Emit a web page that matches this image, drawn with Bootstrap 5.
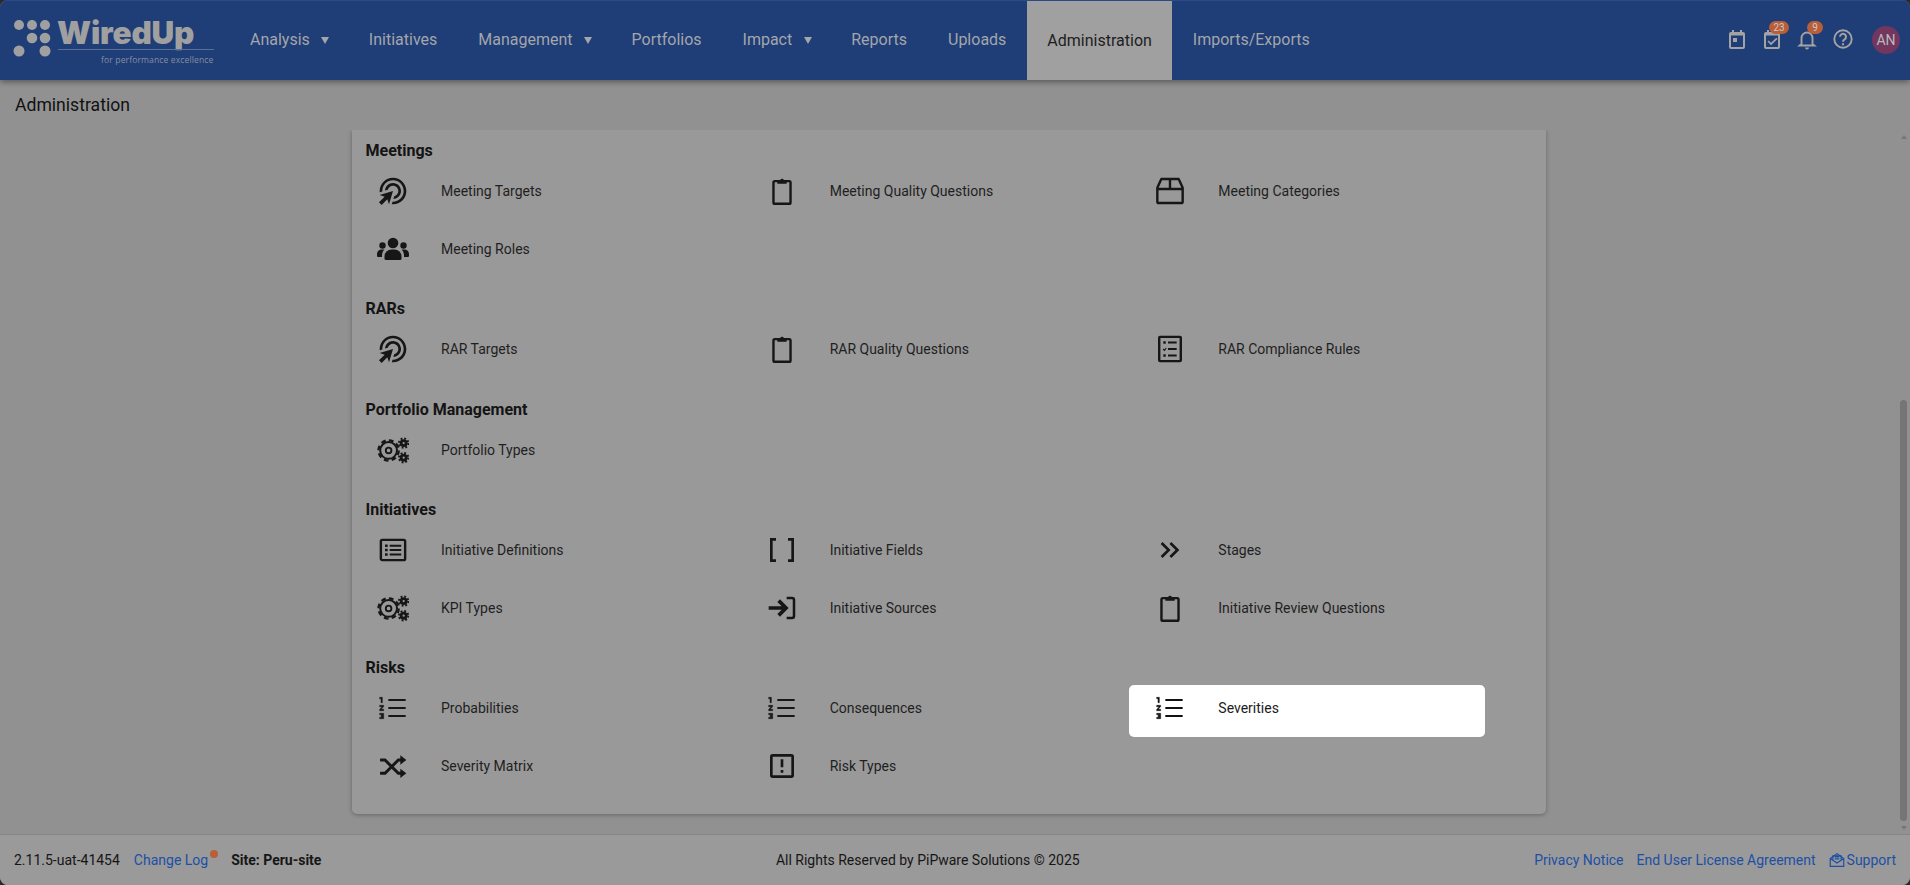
<!DOCTYPE html>
<html lang="en">
<head>
<meta charset="utf-8">
<title>Administration</title>
<link href="https://cdn.jsdelivr.net/npm/bootstrap@5.3.0/dist/css/bootstrap.min.css" rel="stylesheet">
<style>
html,body{height:100%;overflow:hidden;background:#2b2b2b}
body{font-family:Roboto,"Liberation Sans",sans-serif;font-size:14px;color:#1c1c1c}
.app-shell{height:885px;border-radius:8px;overflow:hidden;background:#919191}
.top-bar{height:80px;background:#1f3d77;border-top:1px solid #2a4a8a;box-shadow:0 2px 6px rgba(0,0,0,.4);z-index:2;flex:none}
.logo-brand{width:229.5px;height:79px;flex:none;margin:0;padding:0;position:relative}
.logo-dots{position:absolute;left:0;top:-1px;fill:#a0a0a0}
.logo-word{position:absolute;left:57px;top:10px;font:900 31.5px/44px Inter,"Open Sans",sans-serif;letter-spacing:-.2px;color:#a0a0a0}
.logo-rule{position:absolute;left:58px;width:156px;top:48px;height:1px;background:#5a6f98}
.logo-tag{position:absolute;right:16px;top:52px;font:400 8.6px/14px "Open Sans",sans-serif;letter-spacing:.1px;color:#858da0}
.top-bar .navbar-nav .nav-link{height:78px;display:flex;align-items:center;padding:0 20.5px;font-size:16px;color:#a3a6aa}
.top-bar .navbar-nav .nav-link.has-caret{padding-right:38.5px;position:relative}
.top-bar .navbar-nav .nav-link.has-caret::after{content:"";position:absolute;right:19px;top:36px;border:4.5px solid transparent;border-top:7px solid #a3a6aa;border-bottom:0}
.top-bar .navbar-nav .nav-link.active-tab{background:#a0a0a0;color:#1e1e1e;height:79px}
.tool-icons{margin-left:auto;height:79px;position:relative;width:190px;flex:none}
.tool-btn{position:absolute;top:26px;width:24px;height:24px;color:#a3a3a3}
.tool-btn svg{display:block}
.count-pill{position:absolute;top:-6px;height:13px;border-radius:7px;background:#b85f3a;color:#c9c9c9;font-size:10px;line-height:13px;text-align:center}
.user-avatar{position:absolute;left:152px;top:25px;width:28px;height:28px;border-radius:50%;background:#72365f;color:#b9b9b9;font-size:14px;line-height:28px;text-align:center}
.page-title{height:50px;padding:13px 15px 0;font-size:17.6px;line-height:24px;color:#111;flex:none}
.scroll-area{flex:1 1 auto;min-height:0;position:relative;overflow:hidden;padding-right:12px}
.admin-panel{width:1194px;height:684px;margin:0 auto;background:#999;border-radius:0 0 5px 5px;box-shadow:0 1px 4px rgba(0,0,0,.3);padding:9px 28px 0 0}
.group-title{margin:13.3px 0 5px 13.5px;font-size:16px;line-height:24px;font-weight:700;color:#141414}
.group-title.first-group{margin-top:0}
.admin-item{width:356px;height:52px;margin-bottom:6px;padding-bottom:6px;display:flex;align-items:center;color:#1f1f1f;border-radius:5px;text-decoration:none;line-height:20px;font-size:14px}
.admin-item .icon-slot{width:82px;margin-right:7px;display:flex;justify-content:center;flex:none;color:#161616}
.admin-item.is-highlighted{background:#fff;color:#1c1c1c}
.admin-item.is-highlighted .icon-slot{color:#111}
.scroll-thumb{position:absolute;right:3px;top:270px;width:7px;height:421px;border-radius:4px;background:#757575}
.scroll-up,.scroll-down{position:absolute;right:3px;border:3.5px solid transparent}
.scroll-up{top:5px;border-bottom:4px solid #777;border-top:0}
.scroll-down{bottom:4px;border-top:4px solid #777;border-bottom:0}
.site-footer{height:51px;flex:none;background:#9a9a9a;border-top:1px solid #868686;padding:0 14px;font-size:14px;color:#161616}
.site-footer a{color:#1d4fa5;text-decoration:none}
.foot-gap-log{margin-left:14px}
.foot-gap-site{margin-left:13px}
.foot-gap-link{margin-left:13px}
.foot-gap-support{margin-left:12px}
.alert-dot{display:inline-block;width:8px;height:8px;border-radius:50%;background:#b85f3a;vertical-align:7px;margin-left:2px}
.support-mark{margin-right:1px}
</style>
</head>
<body>
<svg width="0" height="0" class="position-absolute">
<defs>
<symbol id="i-target" viewBox="0 0 24 24"><g transform="translate(24,0) scale(-1,1)"><path fill="currentColor" d="M11.71,17.99C8.53,17.84,6,15.22,6,12c0-3.31,2.69-6,6-6c3.22,0,5.84,2.53,5.99,5.71l-2.1-0.63C15.48,9.31,13.89,8,12,8 c-2.21,0-4,1.79-4,4c0,1.89,1.31,3.48,3.08,3.89L11.71,17.99z M22,12c0,0.3-0.01,0.6-0.04,0.9l-1.97-0.59C20,12.21,20,12.1,20,12 c0-4.42-3.58-8-8-8s-8,3.58-8,8s3.58,8,8,8c0.1,0,0.21,0,0.31-0.01l0.59,1.97C12.6,21.99,12.3,22,12,22C6.48,22,2,17.52,2,12 C2,6.48,6.48,2,12,2S22,6.48,22,12z M18.23,16.26L22,15l-10-3l3,10l1.26-3.77l4.27,4.27l1.98-1.98L18.23,16.26z"/></g></symbol>
<symbol id="i-clip" viewBox="0 0 24 24"><rect x="5.6" y="4.6" width="12.8" height="17" rx="1" fill="none" stroke="currentColor" stroke-width="1.8"/><path fill="currentColor" d="M8.5 3.8h2.100a1.500 1.500 0 0 1 2.800 0h2.100v2.800h-7z"/></symbol>
<symbol id="i-box" viewBox="0 0 24 24"><path fill="none" stroke="currentColor" stroke-width="1.8" stroke-linejoin="round" d="M5.5 3h13l3 6.500V20a1 1 0 0 1-1 1h-17a1 1 0 0 1-1-1V9.500zM2.500 10.500h19M12 3v7.500"/></symbol>
<symbol id="i-check-list" viewBox="0 0 24 24"><rect x="3.900" y="2.900" width="16.200" height="18.200" rx=".6" fill="none" stroke="currentColor" stroke-width="1.800"/><path fill="currentColor" d="M7 6.200h1.800V8H7zM10.500 6.300h6.500v1.500h-6.500zM10.500 11.300h6.500v1.500h-6.500zM7 16h1.800v1.800H7zM10.500 16.200h6.500v1.500h-6.500z"/><path fill="none" stroke="currentColor" stroke-width=".8" d="M6.800 12l1 1 1.400-1.700"/></symbol>
<symbol id="i-group" viewBox="0 0 32 32"><g fill="currentColor"><circle cx="16" cy="10" r="5.300"/><circle cx="5.500" cy="12.500" r="3.200"/><circle cx="26.500" cy="12.500" r="3.200"/><path d="M9 27a1.500 1.500 0 0 1-1.500-1.500v-2a7 7 0 0 1 7-7h3a7 7 0 0 1 7 7v2a1.500 1.500 0 0 1-1.500 1.500z"/><path d="M0 23v-2a4.500 4.500 0 0 1 4.500-4.500h3c-1.800 1.500-2.500 3.500-2.500 6.500v1H1a1 1 0 0 1-1-1z"/><path d="M32 23v-2a4.500 4.500 0 0 0-4.500-4.500h-3c1.800 1.500 2.500 3.500 2.500 6.500v1h4a1 1 0 0 0 1-1z"/></g></symbol>
<symbol id="i-gears" viewBox="0 0 24 24"><g fill="none" stroke="currentColor"><circle cx="8.700" cy="12.300" r="6.300" stroke-width="1.500"/><circle cx="8.700" cy="12.300" r="7.600" stroke-width="1.700" stroke-dasharray="3.500 2.470"/><circle cx="8.700" cy="12.300" r="2.100" stroke-width="1.400"/><circle cx="20" cy="6.800" r="1.900" stroke-width="2.100"/><circle cx="20" cy="6.800" r="3.500" stroke-width="1.500" stroke-dasharray="1.370 1.380"/><circle cx="20" cy="17.800" r="1.900" stroke-width="2.100"/><circle cx="20" cy="17.800" r="3.500" stroke-width="1.500" stroke-dasharray="1.370 1.380"/></g></symbol>
<symbol id="i-list" viewBox="0 0 24 24"><rect x="2.900" y="4.400" width="18.200" height="15.200" rx="1" fill="none" stroke="currentColor" stroke-width="1.800"/><path fill="currentColor" d="M6 7.800h2v1.900H6zM6 11.100h2V13H6zM6 14.400h2v1.900H6zM9.500 8h8.700v1.500H9.500zM9.500 11.300h8.700v1.500H9.500zM9.500 14.600h8.700v1.500H9.500z"/></symbol>
<symbol id="i-brackets" viewBox="0 0 24 24"><path fill="none" stroke="currentColor" stroke-width="2" d="M7.500 4H4v16h3.500M16.500 4H20v16h-3.500"/></symbol>
<symbol id="i-source" viewBox="0 0 24 24"><path fill="none" stroke="currentColor" stroke-width="2.800" d="M2 12h11.500M9.500 6.500l5.500 5.500-5.500 5.500"/><path fill="none" stroke="currentColor" stroke-width="1.900" d="M15.500 4.500h4a1.500 1.500 0 0 1 1.500 1.500v12a1.500 1.500 0 0 1-1.500 1.500h-4"/></symbol>
<symbol id="i-chevrons" viewBox="0 0 24 24"><path fill="currentColor" d="M6.410,6L5,7.410L9.580,12L5,16.590L6.410,18l6-6L6.410,6z M13,6l-1.410,1.410L16.170,12l-4.580,4.590L13,18l6-6L13,6z"/></symbol>
<symbol id="i-numbered" viewBox="0 0 24 24"><path fill="currentColor" stroke="currentColor" stroke-width=".35" d="M2 17h2v.5H3v1h1v.5H2v1h3v-4H2v1zm1-9h1V4H2v1h1v3zm-1 3h1.800L2 13.100v.900h3v-1H3.200L5 10.900V10H2v1z"/><path fill="currentColor" d="M8.500 5.200v1.600H21.500V5.200zM8.500 18.800H21.500v-1.600H8.500zM8.500 12.800H21.500v-1.600H8.500z"/></symbol>
<symbol id="i-shuffle" viewBox="0 0 24 24"><path fill="none" stroke="currentColor" stroke-width="2.200" d="M2.300 7.500h3.700l10 10h2.500M2.300 17.500h3.700l10-10h2.500"/><path fill="currentColor" d="M17.500 4l4.500 3.500-4.500 3.500zM17.500 14l4.500 3.500-4.500 3.500z"/></symbol>
<symbol id="i-alert" viewBox="0 0 24 24"><rect x="4" y="4" width="16" height="16" rx="1" fill="none" stroke="currentColor" stroke-width="2"/><path fill="currentColor" d="M11 7h2v6h-2zM11 15h2v2h-2z"/></symbol>
</defs>
</svg>

<div class="app-shell d-flex flex-column">
  <nav class="navbar navbar-expand top-bar p-0 flex-nowrap align-items-start">
    <a class="navbar-brand logo-brand" href="#">
      <svg class="logo-dots" width="58" height="70" viewBox="0 0 58 70"><circle cx="19" cy="25" r="5"/><circle cx="32" cy="25" r="5"/><circle cx="45" cy="25" r="5"/><circle cx="32" cy="38" r="5.300"/><circle cx="45" cy="38" r="5.300"/><circle cx="19" cy="51" r="5.500"/><circle cx="45" cy="51" r="5.500"/></svg>
      <span class="logo-word">WiredUp</span>
      <span class="logo-rule"></span>
      <span class="logo-tag">for performance excellence</span>
    </a>
    <ul class="navbar-nav flex-row">
      <li class="nav-item"><a class="nav-link has-caret" href="#">Analysis</a></li>
      <li class="nav-item"><a class="nav-link" href="#">Initiatives</a></li>
      <li class="nav-item"><a class="nav-link has-caret" href="#">Management</a></li>
      <li class="nav-item"><a class="nav-link" href="#">Portfolios</a></li>
      <li class="nav-item"><a class="nav-link has-caret" href="#">Impact</a></li>
      <li class="nav-item"><a class="nav-link" href="#">Reports</a></li>
      <li class="nav-item"><a class="nav-link" href="#">Uploads</a></li>
      <li class="nav-item"><a class="nav-link active-tab" href="#">Administration</a></li>
      <li class="nav-item"><a class="nav-link" href="#">Imports/Exports</a></li>
    </ul>
    <div class="tool-icons">
      <span class="tool-btn" style="left:5px"><svg width="24" height="24" viewBox="0 0 24 24"><path fill="currentColor" d="M7 3h2v2h6V3h2v2h1a2 2 0 0 1 2 2v13a2 2 0 0 1-2 2H6a2 2 0 0 1-2-2V7a2 2 0 0 1 2-2h1zM6 8.500V20h12V8.500zM8 11h4v4H8z"/></svg></span>
      <span class="tool-btn" style="left:40px"><svg width="24" height="24" viewBox="0 0 24 24"><path fill="currentColor" d="M7 3h2v2h6V3h2v2h1a2 2 0 0 1 2 2v13a2 2 0 0 1-2 2H6a2 2 0 0 1-2-2V7a2 2 0 0 1 2-2h1zM6 8.500V20h12V8.500zm10.300 2.300 1.200 1.200-6.500 6.200L7.500 14.600l1.200-1.200 2.300 2.300z"/></svg><span class="count-pill" style="left:9px;width:20px">23</span></span>
      <span class="tool-btn" style="left:75px"><svg width="24" height="24" viewBox="0 0 24 24"><path fill="none" stroke="currentColor" stroke-width="1.900" d="M6.500 17v-6a5.500 5.500 0 0 1 11 0v6l1.800 1.500H4.700z"/><path fill="currentColor" d="M10 20.500h4a2 2 0 0 1-4 0z"/></svg><span class="count-pill" style="left:12px;width:16px">9</span></span>
      <span class="tool-btn" style="left:111px"><svg width="24" height="24" viewBox="0 0 24 24"><circle cx="12" cy="12" r="8.700" fill="none" stroke="currentColor" stroke-width="1.900"/><path fill="none" stroke="currentColor" stroke-width="2" d="M9 9.800a3 3 0 1 1 4.700 2.500c-1.100.8-1.700 1.200-1.700 2.500"/><path fill="currentColor" d="M11 16.200h2v2h-2z"/></svg></span>
      <span class="user-avatar">AN</span>
    </div>
  </nav>

  <div class="page-title">Administration</div>

  <main class="scroll-area">
    <div class="admin-panel">
      <div class="group-title first-group">Meetings</div>
      <div class="row g-0">
        <div class="col-4"><a class="admin-item" href="#"><span class="icon-slot"><svg width="32" height="32"><use href="#i-target"/></svg></span>Meeting Targets</a></div>
        <div class="col-4"><a class="admin-item" href="#"><span class="icon-slot"><svg width="32" height="32"><use href="#i-clip"/></svg></span>Meeting Quality Questions</a></div>
        <div class="col-4"><a class="admin-item" href="#"><span class="icon-slot"><svg width="32" height="32"><use href="#i-box"/></svg></span>Meeting Categories</a></div>
        <div class="col-4"><a class="admin-item" href="#"><span class="icon-slot"><svg width="32" height="32"><use href="#i-group"/></svg></span>Meeting Roles</a></div>
      </div>
      <div class="group-title">RARs</div>
      <div class="row g-0">
        <div class="col-4"><a class="admin-item" href="#"><span class="icon-slot"><svg width="32" height="32"><use href="#i-target"/></svg></span>RAR Targets</a></div>
        <div class="col-4"><a class="admin-item" href="#"><span class="icon-slot"><svg width="32" height="32"><use href="#i-clip"/></svg></span>RAR Quality Questions</a></div>
        <div class="col-4"><a class="admin-item" href="#"><span class="icon-slot"><svg width="32" height="32"><use href="#i-check-list"/></svg></span>RAR Compliance Rules</a></div>
      </div>
      <div class="group-title">Portfolio Management</div>
      <div class="row g-0">
        <div class="col-4"><a class="admin-item" href="#"><span class="icon-slot"><svg width="32" height="32"><use href="#i-gears"/></svg></span>Portfolio Types</a></div>
      </div>
      <div class="group-title">Initiatives</div>
      <div class="row g-0">
        <div class="col-4"><a class="admin-item" href="#"><span class="icon-slot"><svg width="32" height="32"><use href="#i-list"/></svg></span>Initiative Definitions</a></div>
        <div class="col-4"><a class="admin-item" href="#"><span class="icon-slot"><svg width="32" height="32"><use href="#i-brackets"/></svg></span>Initiative Fields</a></div>
        <div class="col-4"><a class="admin-item" href="#"><span class="icon-slot"><svg width="32" height="32"><use href="#i-chevrons"/></svg></span>Stages</a></div>
        <div class="col-4"><a class="admin-item" href="#"><span class="icon-slot"><svg width="32" height="32"><use href="#i-gears"/></svg></span>KPI Types</a></div>
        <div class="col-4"><a class="admin-item" href="#"><span class="icon-slot"><svg width="32" height="32"><use href="#i-source"/></svg></span>Initiative Sources</a></div>
        <div class="col-4"><a class="admin-item" href="#"><span class="icon-slot"><svg width="32" height="32"><use href="#i-clip"/></svg></span>Initiative Review Questions</a></div>
      </div>
      <div class="group-title">Risks</div>
      <div class="row g-0">
        <div class="col-4"><a class="admin-item" href="#"><span class="icon-slot"><svg width="32" height="32"><use href="#i-numbered"/></svg></span>Probabilities</a></div>
        <div class="col-4"><a class="admin-item" href="#"><span class="icon-slot"><svg width="32" height="32"><use href="#i-numbered"/></svg></span>Consequences</a></div>
        <div class="col-4"><a class="admin-item is-highlighted" href="#"><span class="icon-slot"><svg width="32" height="32"><use href="#i-numbered"/></svg></span>Severities</a></div>
        <div class="col-4"><a class="admin-item" href="#"><span class="icon-slot"><svg width="32" height="32"><use href="#i-shuffle"/></svg></span>Severity Matrix</a></div>
        <div class="col-4"><a class="admin-item" href="#"><span class="icon-slot"><svg width="32" height="32"><use href="#i-alert"/></svg></span>Risk Types</a></div>
      </div>
    </div>
    <span class="scroll-up"></span>
    <span class="scroll-thumb"></span>
    <span class="scroll-down"></span>
  </main>

  <footer class="site-footer d-flex align-items-center justify-content-between">
    <div class="d-flex align-items-center">
      <span>2.11.5-uat-41454</span>
      <a class="foot-gap-log" href="#">Change Log<span class="alert-dot"></span></a>
      <strong class="foot-gap-site fw-bold">Site: Peru-site</strong>
    </div>
    <div>All Rights Reserved by PiPware Solutions © 2025</div>
    <div class="d-flex align-items-center">
      <a href="#">Privacy Notice</a>
      <a class="foot-gap-link" href="#">End User License Agreement</a>
      <a class="foot-gap-support d-flex align-items-center" href="#"><svg class="support-mark" width="18" height="18" viewBox="0 0 24 24" fill="none" stroke="currentColor" stroke-width="1.600"><path d="M3 10 12 3.500 21 10v10.500H3zM3 10l9 6 9-6"/><path d="M6.500 11.500V6.500h11v5M9 8h6M9 10.500h6"/></svg>Support</a>
    </div>
  </footer>
</div>
<script src="https://cdn.jsdelivr.net/npm/bootstrap@5.3.0/dist/js/bootstrap.bundle.min.js"></script>
</body>
</html>
